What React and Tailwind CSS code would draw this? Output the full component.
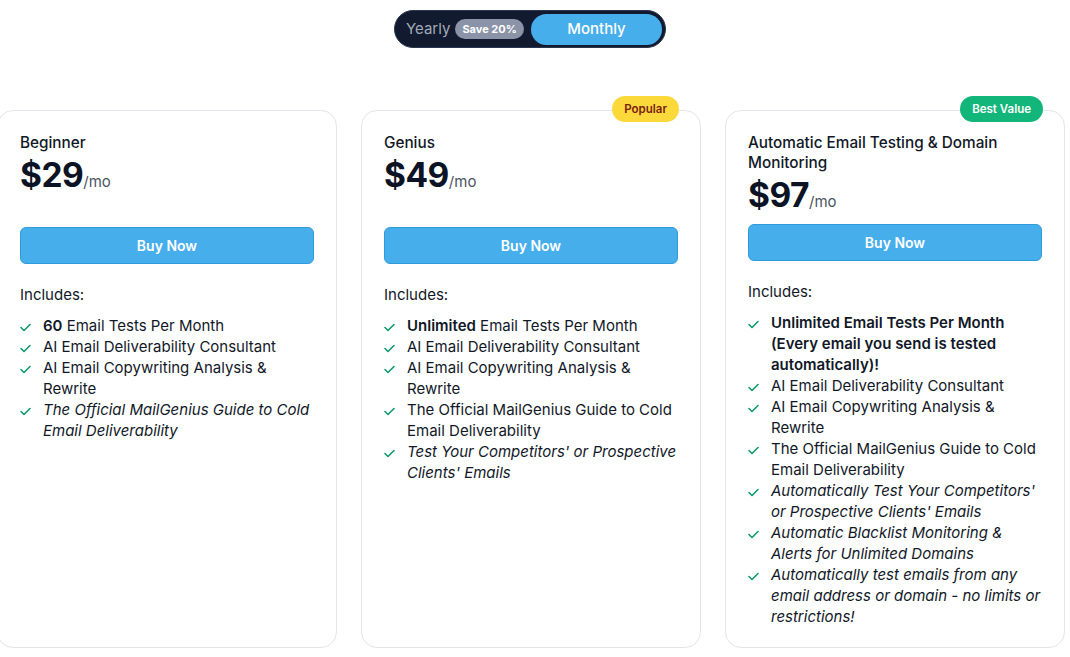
import { useState } from "react";

const plans = [
  {
    name: "Beginner",
    price: 29,
    head: "h-[94px]",
    features: [
      { b: "60", t: " Email Tests Per Month" },
      { t: "AI Email Deliverability Consultant" },
      { t: "AI Email Copywriting Analysis & Rewrite" },
      { t: "The Official MailGenius Guide to Cold Email Deliverability", i: true },
    ],
  },
  {
    name: "Genius",
    price: 49,
    badge: "Popular",
    head: "h-[94px]",
    features: [
      { b: "Unlimited", t: " Email Tests Per Month" },
      { t: "AI Email Deliverability Consultant" },
      { t: "AI Email Copywriting Analysis & Rewrite" },
      { t: "The Official MailGenius Guide to Cold Email Deliverability" },
      { t: "Test Your Competitors' or Prospective Clients' Emails", i: true },
    ],
  },
  {
    name: "Automatic Email Testing & Domain Monitoring",
    price: 97,
    badge: "Best Value",
    head: "h-[91px]",
    features: [
      { b: "Unlimited Email Tests Per Month (Every email you send is tested automatically)!" },
      { t: "AI Email Deliverability Consultant" },
      { t: "AI Email Copywriting Analysis & Rewrite" },
      { t: "The Official MailGenius Guide to Cold Email Deliverability" },
      { t: "Automatically Test Your Competitors' or Prospective Clients' Emails", i: true },
      { t: "Automatic Blacklist Monitoring & Alerts for Unlimited Domains", i: true },
      {
        t: "Automatically test emails from any email address or domain - no limits or restrictions!",
        i: true,
      },
    ],
  },
];

function Check() {
  return (
    <svg width="11" height="9" viewBox="0 0 11 9" className="mt-[8px] shrink-0">
      <path d="M1 4.5 L4 7.5 L10 1.5" fill="none" stroke="#0f9a6a" strokeWidth="1.6" strokeLinecap="round" strokeLinejoin="round" />
    </svg>
  );
}

export default function App() {
  const [monthly, setMonthly] = useState(true);

  return (
    <div className="w-[1070px] h-[657px] bg-white overflow-hidden font-['Inter',sans-serif] text-[#111827]">
      <div className="flex justify-center pt-[10px]">
        <div className="flex items-center h-[38px] w-[272px] rounded-full bg-[#111a2e] border border-[#2a3550] p-[2px] ml-[-10px]">
          <button
            onClick={() => setMonthly(false)}
            className="flex items-center gap-[5px] pl-[9px] h-full"
          >
            <span className="text-[15px] text-[#a3aab8]">Yearly</span>
            <span className="rounded-full bg-[#8a93a8] text-white text-[11px] font-bold px-[7px] h-[20px] leading-[20px]">
              Save 20%
            </span>
          </button>
          <button
            onClick={() => setMonthly(true)}
            className="ml-auto mr-[1px] w-[131px] h-[31px] rounded-full bg-[#47aeec] text-white text-[15px] font-medium"
          >
            Monthly
          </button>
        </div>
      </div>

      <div className="flex gap-6 mt-[62px] ml-[-3px]">
        {plans.map((p) => (
          <div
            key={p.name}
            className="relative w-[340px] h-[538px] shrink-0 rounded-[16px] border border-[#e3e5ea] bg-white px-[22px] pt-[22px]"
          >
            {p.badge && (
              <span
                className={
                  "absolute right-[21px] top-[-15px] h-[26px] leading-[26px] px-[12px] rounded-full text-[11.5px] font-semibold " +
                  (p.badge === "Popular"
                    ? "bg-[#fcd93a] text-[#7a1d12]"
                    : "bg-[#12b57a] text-white")
                }
              >
                {p.badge}
              </span>
            )}
            <div className={p.head}>
              <h3 className="text-[15.3px] font-medium leading-[20px] pr-[30px]">{p.name}</h3>
              <div className="flex items-baseline mt-[2px]">
                <span className="text-[33.5px] font-bold leading-[40px] tracking-[-0.5px] text-[#0b1324]">
                  ${p.price}
                </span>
                <span className="text-[15px] text-[#4b5563]">/mo</span>
              </div>
            </div>
            <button className="w-full h-[37px] rounded-[6px] bg-[#47aeec] border border-[#2f9bdb] text-white text-[14px] font-semibold">
              Buy Now
            </button>
            <p className="mt-[20px] text-[15px] leading-[21px]">Includes:</p>
            <ul className="mt-[10px]">
              {p.features.map((f, idx) => (
                <li key={idx} className="flex gap-[12px] text-[15px] leading-[21px]">
                  <Check />
                  <span className={f.i ? "italic" : ""}>
                    {f.b && <b className="font-semibold">{f.b}</b>}
                    {f.t}
                  </span>
                </li>
              ))}
            </ul>
          </div>
        ))}
      </div>
    </div>
  );
}
